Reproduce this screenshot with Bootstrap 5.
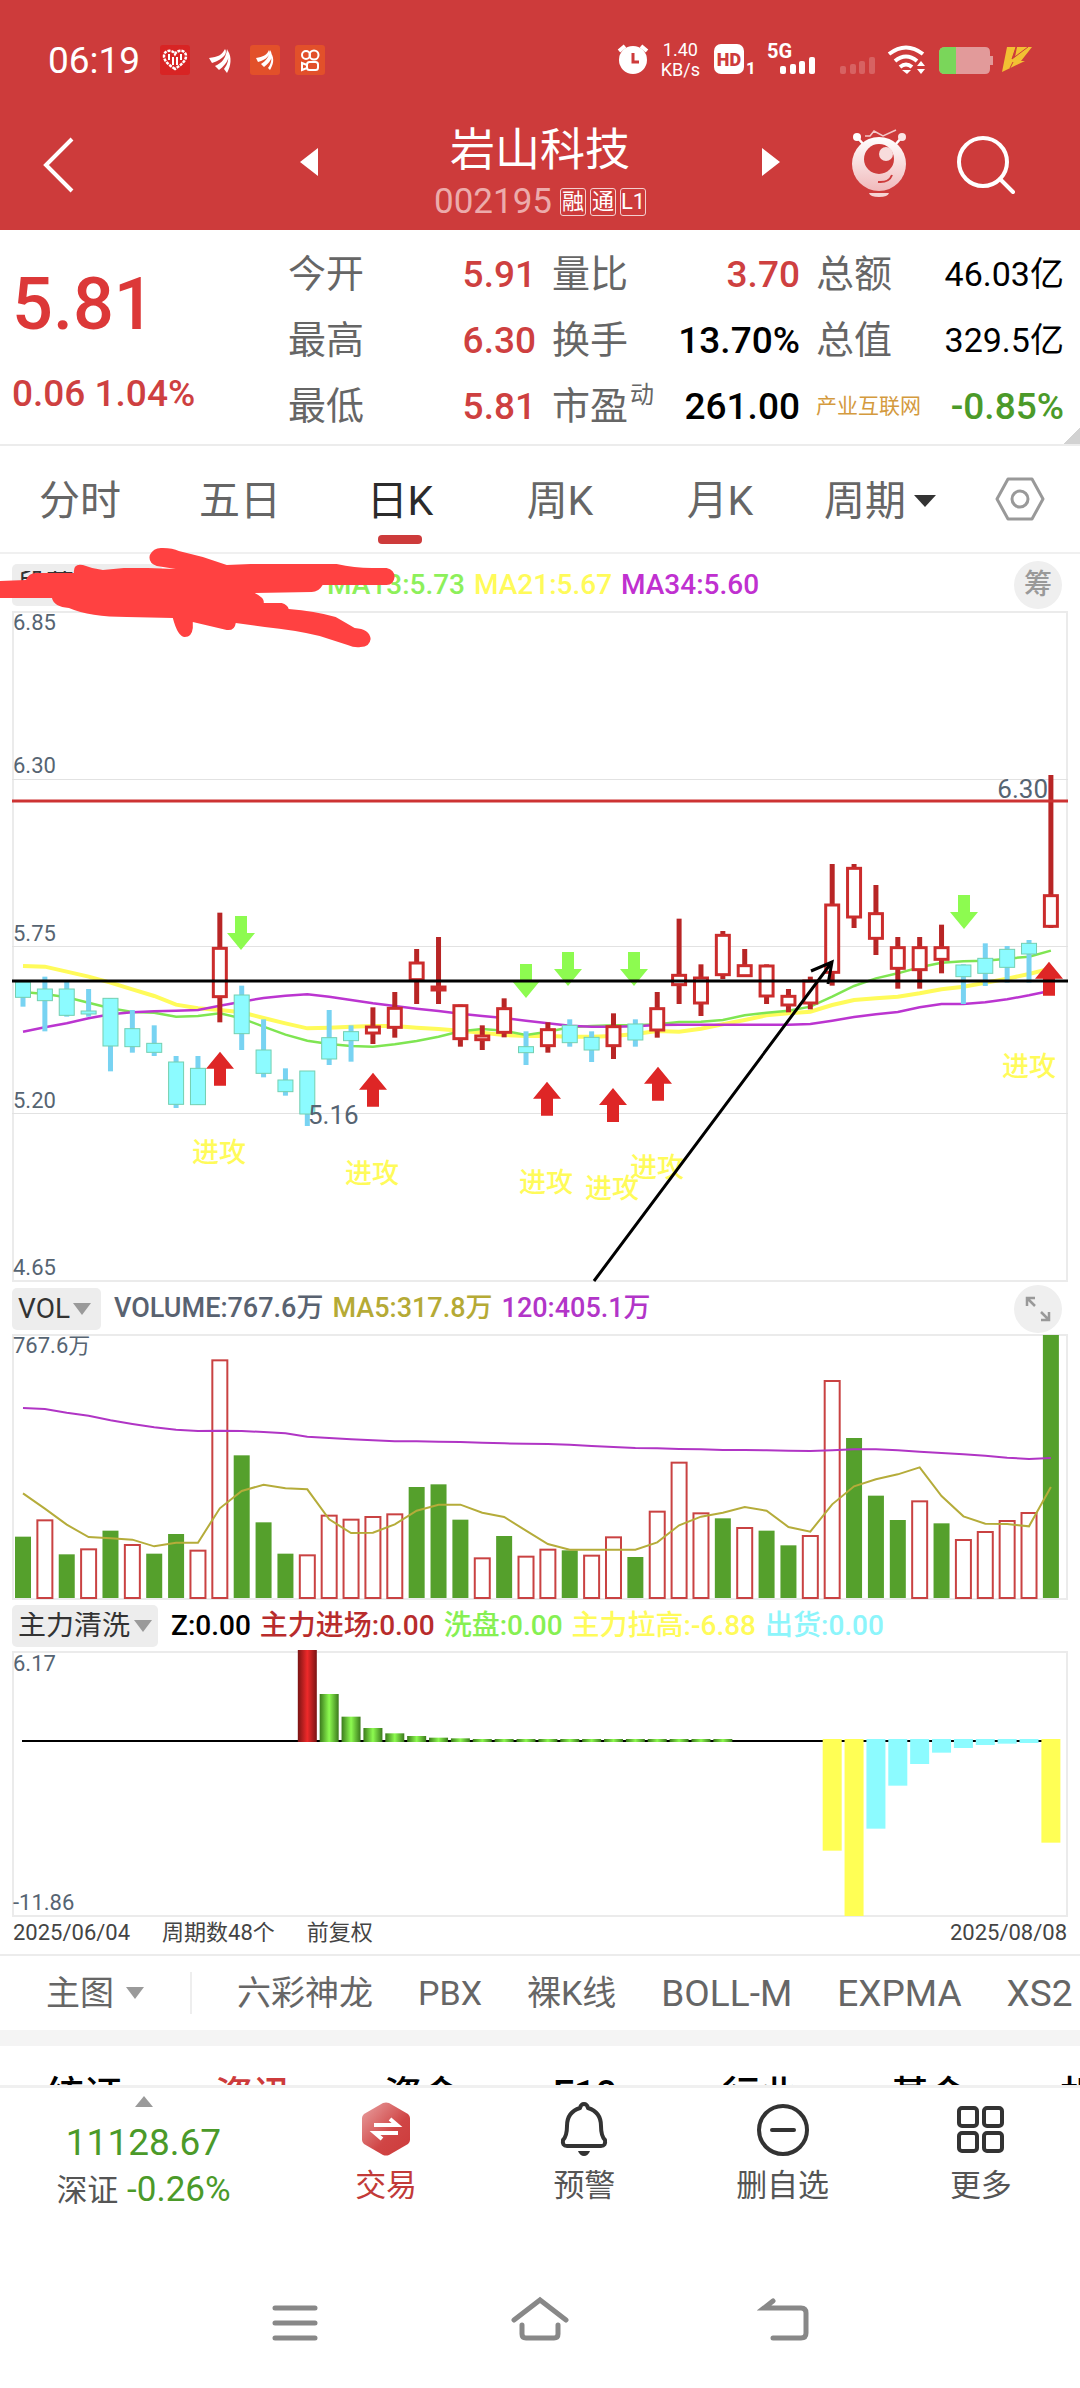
<!DOCTYPE html>
<html lang="zh-CN">
<head>
<meta charset="utf-8">
<meta name="viewport" content="width=device-width, initial-scale=1">
<title>岩山科技 002195</title>
<link href="https://cdn.jsdelivr.net/npm/bootstrap@5.3.0/dist/css/bootstrap.min.css" rel="stylesheet">
<style>
:root{--brand:#cd3b3b;--ink:#666;--line:#ececec;--axis:#566472}
body{font-family:Roboto,"Noto Sans CJK SC",sans-serif;background:#fff;color:#000;line-height:1;overflow-x:hidden}
button,select{font:inherit;color:inherit;background:none;border:0;padding:0}
svg{display:block;flex:none}
a{color:inherit;text-decoration:none}
.topbar{background:var(--brand);color:#fff;height:230px}
.statusbar{height:120px;padding:0 48px}
.clock{font-size:37px}
.rate{font-size:18px;line-height:20px}
.titlebar{height:110px}
.side{width:300px}
.back{padding:17px 0 0 43px}
.tools{padding:8px 65px 0 0;gap:48px}
.stock-name{font-size:45px;line-height:54px;margin:4px 0 0;font-weight:400}
.code{font-size:35px;color:#ecabab;line-height:40px;margin-top:4px}
.flag{font-size:22px;width:26px;height:28px;line-height:26px;border:1px solid #f3cfcf;border-radius:3px;color:#fff;text-align:center}
.quote{padding:11px 16px 5px 12px;border-bottom:2px solid var(--line);position:relative}
.quote-main{width:276px;padding-top:28px}
.price{font-size:72px;line-height:72px;font-weight:500;color:#dc3838;margin-bottom:34px}
.delta{font-size:37px;line-height:37px;font-weight:500;color:#ce4040}
.cell-row{height:66px;font-size:38px;color:var(--ink)}
.cell-row b{font-size:37px;font-weight:500;color:#000}
.cell-row .sm-num{font-size:34px;font-weight:400}
.cell-row b.up{color:#ce4040}
.cell-row b.down{color:#4b9a29}
.cell-row sup{font-size:24px;top:-16px;font-weight:400;margin-left:2px}
.sector{font-size:21px;color:#d49a3e}
.corner{position:absolute;right:0;bottom:0;width:16px;height:16px;background:linear-gradient(135deg,transparent 50%,#d2d2d2 50%)}
.period{height:108px;font-size:41px;color:var(--ink);border-bottom:2px solid #f0f0f0}
.period .tab{width:160px;height:100%;position:relative;padding-top:4px}
.period .on{color:#2b2b2b}
.period .on::after{content:"";position:absolute;left:50%;bottom:8px;width:44px;height:9px;margin-left:-22px;border-radius:4px;background:var(--brand)}
.tri{display:inline-block;border:9px solid transparent;border-top:12px solid #9a9a9a;border-bottom:0}
.tri-dark{border-width:12px 11px 0;border-top-color:#333}
.tri-up{border-top:0;border-bottom:11px solid #9a9a9a}
.legend-row{height:57px;padding:4px 18px 0 12px;font-size:28px;font-weight:500;gap:9px;white-space:nowrap}
.legend-row.tight{height:51px;padding-top:0}
.ma-row{padding-left:156px;gap:9px}
.vol-row{font-size:27px}
.chip{background:#ededed;border-radius:5px;height:42px;padding:0 6px;font-size:28px;font-weight:400;color:#333;gap:3px}
.chip select,.main-pick select{appearance:none;width:auto;text-overflow:clip}
.wide{padding-right:10px}
.roundbtn{width:48px;height:48px;border-radius:50%;background:#efefef;color:#999;font-size:28px}
.panel{padding:0 12px;position:relative}
.panel svg{width:100%;height:auto;overflow:visible}
.scribble{position:absolute;left:0;top:-10px;width:37%;pointer-events:none}
.dates{height:37px;font-size:22px;color:#444;padding:0 13px 5px;gap:32px}
.indicators{height:76px;border-top:2px solid var(--line);font-size:34px;color:var(--ink);gap:45px;padding-left:46px;overflow:hidden;white-space:nowrap}
.latin{font-size:37px}
.main-pick{gap:12px;width:146px;border-right:2px solid #eee;height:42px}
.band{height:16px;background:#f4f4f4}
.cuttabs{height:39px;overflow:hidden;padding:30px 0 0 46px;font-size:38px;line-height:38px;font-weight:500;white-space:nowrap}
.cuttabs a{width:169px;flex:none}
.bottombar{border-top:3px solid #f0f0f0;height:131px;color:#555}
.index-box{width:287px;flex:none;color:#4b9a29}
.index-val{font-size:37px;line-height:37px;margin:17px 0 11px}
.index-pct{font-size:35px;line-height:35px}
.index-pct small{font-size:31px;color:#555}
.act{font-size:31px;line-height:36px;padding-top:14px;gap:12px;flex:1 1 0}
.sysnav{height:168px;padding:80px 16% 0}
</style>
<script src="https://cdn.jsdelivr.net/npm/bootstrap@5.3.0/dist/js/bootstrap.bundle.min.js"></script>
</head>
<body>
<header class="topbar">
  <div class="statusbar d-flex align-items-center justify-content-between">
    <div class="d-flex align-items-center">
      <span class="clock me-3 pe-1">06:19</span>
      <svg width="170" height="32" viewBox="162 42 170 32">
        <rect x="162" y="43" width="30" height="30" rx="3" fill="#d82424"/>
        <path d="M177 67c-6-4-11-8-11-13 0-6 8-7 11-2 3-5 11-4 11 2 0 5-5 9-11 13z" fill="none" stroke="#fff" stroke-width="2.5" stroke-dasharray="3 1"/>
        <path d="M171 52v6m4-3v8m4-8v8m4-11v6" stroke="#fff" stroke-width="2"/>
        <path fill="#fff" d="M211 56c9-1 13-3 16-9 3 4-1 10-13 14zM217 64c7-3 11-8 12-17 4 7 1 14-8 21zM226 67c4-5 5-10 4-18 4 6 3 15-1 22z"/>
        <rect x="252" y="43" width="30" height="30" rx="3" fill="#e2502a"/>
        <path fill="#fff" d="M258 56c7-1 11-3 13-8 2 4-2 10-11 12zM263 62c5-3 8-7 9-14 4 6 1 12-6 17zM270 66c3-4 4-8 3-15 4 6 2 12-1 17z"/>
        <rect x="297" y="43" width="30" height="30" rx="3" fill="#e2502a"/>
        <g fill="none" stroke="#fff" stroke-width="2"><circle cx="308" cy="53" r="4"/><circle cx="316" cy="53" r="4.500"/><rect x="309" y="60" width="11" height="8" rx="2.500"/><path d="M304 61l5 2v3l-5 2z"/></g>
      </svg>
    </div>
    <div class="d-flex align-items-center">
      <svg width="32" height="32" viewBox="620 44 32 32"><circle cx="636" cy="60" r="14" fill="#fff"/><path d="M622 51l6-5m22 5l-6-5" stroke="#fff" stroke-width="4"/><path d="M636 53v9h6" fill="none" stroke="#cd3b3b" stroke-width="3"/></svg>
      <div class="rate text-center mx-2 ps-1">1.40<br>KB/s</div>
      <svg class="ms-1" width="320" height="36" viewBox="712 42 320 36">
        <rect x="714" y="44" width="30" height="30" rx="7" fill="#fff"/>
        <text x="729" y="66" font-size="18" font-weight="900" text-anchor="middle" fill="#cd3b3b">HD</text>
        <text x="746" y="74" font-size="17" font-weight="700" fill="#fff">1</text>
        <text x="767" y="58" font-size="20" font-weight="700" fill="#fff">5G</text>
        <g fill="#fff"><rect x="780" y="66" width="6" height="8" rx="2"/><rect x="790" y="64" width="6" height="10" rx="2"/><rect x="799" y="61" width="6" height="13" rx="2"/><rect x="809" y="57" width="6" height="17" rx="2"/></g>
        <g fill="#fff" opacity=".2"><rect x="840" y="66" width="6" height="8" rx="2"/><rect x="850" y="64" width="6" height="10" rx="2"/><rect x="859" y="61" width="6" height="13" rx="2"/><rect x="869" y="57" width="6" height="17" rx="2"/></g>
        <g fill="none" stroke="#fff" stroke-width="4"><path d="M889 54q17-13 34 0M895 61q11-9 22 0M900 67q6-5 12 0"/></g>
        <path d="M902 70h9l-4 4zM917 66l4-5 4 5zM917 69h8l-4 5z" fill="#fff"/>
        <path d="M945 47h40q5 0 5 5v4h3v9h-3v4q0 5-5 5h-40q-6 0-6-6V53q0-6 6-6z" fill="#e29a9a"/>
        <path d="M945 47h11v27h-11q-6 0-6-6V53q0-6 6-6z" fill="#7ad65a"/>
        <path d="M1007 47h9l-4 12 17-12h3l-11 14h4l-23 11zM1017 47h15l-14 15h-4z" fill="#f2c033"/>
        <path d="M1016 47l-4 12 16-12M1013 62l-3 6" fill="none" stroke="#cd3b3b" stroke-width="1"/>
      </svg>
    </div>
  </div>
  <div class="titlebar d-flex">
    <div class="side back d-flex align-items-start">
      <button type="button" aria-label="返回"><svg width="32" height="56" viewBox="0 0 32 56"><path d="M29 2L3 28l26 26" fill="none" stroke="#fff" stroke-width="4"/></svg></button>
    </div>
    <div class="flex-fill d-flex justify-content-between">
      <button type="button" aria-label="上一只" class="align-self-start mt-4 pt-1"><svg width="18" height="28" viewBox="0 0 18 28"><path d="M18 0v28L0 14z" fill="#fff"/></svg></button>
      <div class="d-flex flex-column align-items-center">
        <h1 class="stock-name">岩山科技</h1>
        <div class="code d-flex align-items-center gap-1"><span class="me-1">002195</span><span class="flag">融</span><span class="flag">通</span><span class="flag">L1</span></div>
      </div>
      <button type="button" aria-label="下一只" class="align-self-start mt-4 pt-1"><svg width="18" height="28" viewBox="0 0 18 28"><path d="M0 0v28l18-14z" fill="#fff"/></svg></button>
    </div>
    <div class="side tools d-flex align-items-start justify-content-end">
      <button type="button" aria-label="智能助手"><svg width="60" height="70" viewBox="849 128 60 70">
        <defs><linearGradient id="bot" x1="0" y1="0" x2="0" y2="1"><stop offset="0" stop-color="#fff"/><stop offset="1" stop-color="#f0b9bb"/></linearGradient></defs>
        <path d="M857 137l7 8m38-8l-7 8" stroke="#fff" stroke-width="2.500"/><circle cx="857" cy="137" r="4" fill="#fff"/><circle cx="902" cy="137" r="4" fill="#fbe5e5"/>
        <path d="M865 136h5l4-5 9 5 13-6" fill="none" stroke="#f3c9c9" stroke-width="1.500"/>
        <circle cx="879" cy="164" r="27" fill="url(#bot)"/><circle cx="879" cy="159" r="15" fill="#cd3b3b"/><circle cx="886" cy="154" r="7" fill="#f8dcdc"/>
        <path d="M878 182q11 1 14-7" fill="none" stroke="#cd3b3b" stroke-width="2"/><path d="M869 193h20q-1 4-10 4t-10-4z" fill="#f6d4d4"/></svg></button>
      <button type="button" aria-label="搜索" class="mt-2"><svg width="58" height="60" viewBox="957 134 58 60"><circle cx="983" cy="160" r="24" fill="none" stroke="#fff" stroke-width="4"/><path d="M1000 177l13 13" stroke="#fff" stroke-width="4" stroke-linecap="round"/></svg></button>
    </div>
  </div>
</header>

<main>
<section class="quote d-flex">
  <div class="quote-main"><div class="price">5.81</div><div class="delta">0.06 1.04%</div></div>
  <div class="flex-fill row row-cols-3 gx-3">
    <div class="col">
      <div class="cell-row d-flex align-items-center justify-content-between">今开<b class="up">5.91</b></div>
      <div class="cell-row d-flex align-items-center justify-content-between">最高<b class="up">6.30</b></div>
      <div class="cell-row d-flex align-items-center justify-content-between">最低<b class="up">5.81</b></div>
    </div>
    <div class="col">
      <div class="cell-row d-flex align-items-center justify-content-between">量比<b class="up">3.70</b></div>
      <div class="cell-row d-flex align-items-center justify-content-between">换手<b>13.70%</b></div>
      <div class="cell-row d-flex align-items-center justify-content-between"><span>市盈<sup>动</sup></span><b>261.00</b></div>
    </div>
    <div class="col">
      <div class="cell-row d-flex align-items-center justify-content-between">总额<b class="sm-num">46.03亿</b></div>
      <div class="cell-row d-flex align-items-center justify-content-between">总值<b class="sm-num">329.5亿</b></div>
      <div class="cell-row d-flex align-items-center justify-content-between"><span class="sector">产业互联网</span><b class="down">-0.85%</b></div>
    </div>
  </div>
  <span class="corner"></span>
</section>

<nav class="period d-flex align-items-center" aria-label="周期">
  <button type="button" class="tab">分时</button><button type="button" class="tab">五日</button><button type="button" class="tab on">日K</button><button type="button" class="tab">周K</button><button type="button" class="tab">月K</button>
  <button type="button" class="tab d-flex align-items-center justify-content-center gap-2">周期<span class="tri tri-dark"></span></button>
  <button type="button" class="flex-fill d-flex justify-content-center" aria-label="设置"><svg width="50" height="46" viewBox="0 0 50 46"><path d="M13 3h24l11 20-11 20H13L2 23z" fill="none" stroke="#999" stroke-width="3" stroke-linejoin="round"/><circle cx="25" cy="23" r="8" fill="none" stroke="#999" stroke-width="3"/></svg></button>
</nav>

<div class="position-relative">
  <div class="legend-row d-flex align-items-center">
    <div class="chip wide d-flex align-items-center"><select aria-label="主图指标"><option>段落主图</option></select><span class="tri"></span></div>
    <div class="d-flex flex-fill ma-row"><span style="color:#8df05a">MA13:5.73</span><span style="color:#fffb5a">MA21:5.67</span><span style="color:#c030d0">MA34:5.60</span></div>
    <button type="button" class="roundbtn">筹</button>
  </div>
  <div class="panel"><svg id="kline" viewBox="12 611 1056 672"></svg></div>
  <svg class="scribble" viewBox="0 544 400 106"><path fill="#ff4141" d="M0 581L26 580Q29 573 36 573H74Q73 563 83 565Q93 569 103 570L124 568H148L176 569L157 566Q148 563 150 555Q154 547 163 548Q173 548 179 551L203 557L227 565L251 564H337Q355 568 372 568H387Q395 570 395 577Q394 585 387 585H323Q319 592 312 592L255 593Q265 598 264 603L282 603Q288 605 289 609Q315 611 336 617Q343 621 355 628Q370 629 371 639Q370 647 361 647Q355 648 348 645L320 636Q295 630 265 627L236 623Q235 631 227 630L193 622V628Q192 637 185 637Q178 637 173 618L127 617Q90 617 69 608Q54 607 52 598L0 598Z"/></svg>
</div>

<div class="legend-row tight vol-row d-flex align-items-center">
  <div class="chip wide d-flex align-items-center"><select aria-label="成交量指标"><option>VOL</option></select><span class="tri"></span></div>
  <span class="ms-1" style="color:#596270">VOLUME:767.6万</span><span style="color:#b5aa35">MA5:317.8万</span><span style="color:#b235c8">120:405.1万</span>
  <button type="button" class="roundbtn ms-auto d-flex align-items-center justify-content-center" aria-label="放大"><svg width="26" height="26" viewBox="0 0 26 26" fill="none" stroke="#999" stroke-width="2.500"><path d="M2 10V2h8M2 2l8 8M24 16v8h-8M24 24l-8-8"/></svg></button>
</div>
<div class="panel"><svg id="volume" viewBox="12 1334 1056 266"></svg></div>

<div class="legend-row tight d-flex align-items-center">
  <div class="chip d-flex align-items-center"><select aria-label="副图指标"><option>主力清洗</option></select><span class="tri"></span></div>
  <span class="ms-1">Z:0.00</span><span style="color:#b82c2c">主力进场:0.00</span><span style="color:#86f052">洗盘:0.00</span><span style="color:#fffb5a">主力拉高:-6.88</span><span style="color:#8cf5fb">出货:0.00</span>
</div>
<div class="panel"><svg id="force" viewBox="12 1652 1056 266"></svg></div>

<div class="dates d-flex align-items-center"><span>2025/06/04</span><span>周期数48个</span><span>前复权</span><span class="ms-auto">2025/08/08</span></div>

<nav class="indicators d-flex align-items-center" aria-label="指标">
  <div class="main-pick d-flex align-items-center flex-shrink-0"><select aria-label="图区"><option>主图</option></select><span class="tri"></span></div>
  <a href="#">六彩神龙</a><a href="#">PBX</a><a href="#">裸K线</a><a href="#" class="latin">BOLL-M</a><a href="#" class="latin">EXPMA</a><a href="#" class="latin">XS2</a>
</nav>
<div class="band"></div>
<nav class="cuttabs d-flex" aria-label="资料"><a href="#">统证</a><a href="#" style="color:#cd3b3b">资讯</a><a href="#">资金</a><a href="#">F10</a><a href="#">行业</a><a href="#">基金</a><a href="#">机构</a></nav>
</main>

<footer>
  <div class="bottombar d-flex">
    <div class="index-box d-flex flex-column align-items-center pt-2"><span class="tri tri-up"></span><div class="index-val">11128.67</div><div class="index-pct"><small>深证</small> -0.26%</div></div>
    <button type="button" class="act d-flex flex-column align-items-center" style="color:#c23a38"><svg width="54" height="54" viewBox="0 0 54 54"><defs><linearGradient id="hex" x1="0" y1="0" x2="1" y2="1"><stop offset="0" stop-color="#e9a3a3"/><stop offset=".6" stop-color="#d04545"/><stop offset="1" stop-color="#cd3b3b"/></linearGradient></defs><path d="M24 1q3-1 6 0l19 11q2 2 2 4v22q0 2-2 4L30 53q-3 1-6 0L5 42q-2-2-2-4V16q0-2 2-4z" fill="url(#hex)"/><path d="M15 23h23l-7-6M39 31H16l7 6" fill="none" stroke="#fff" stroke-width="4"/></svg>交易</button>
    <button type="button" class="act d-flex flex-column align-items-center"><svg width="54" height="54" viewBox="0 0 54 54" fill="none" stroke="#333" stroke-width="4" stroke-linejoin="round"><path d="M27 2q3 0 4 4 13 4 13 18 0 10 4 14 1 6-4 6H10q-5 0-4-6 4-4 4-14Q10 10 23 6q1-4 4-4z"/><path d="M21 49h12q-2 5-6 5t-6-5z" fill="#333" stroke="none"/></svg>预警</button>
    <button type="button" class="act d-flex flex-column align-items-center"><svg width="54" height="54" viewBox="0 0 54 54" fill="none" stroke="#333" stroke-width="4" stroke-linecap="round"><circle cx="27" cy="28" r="24"/><path d="M16 28h22"/></svg>删自选</button>
    <button type="button" class="act d-flex flex-column align-items-center"><svg width="54" height="54" viewBox="0 0 54 54" fill="none" stroke="#333" stroke-width="4"><rect x="5" y="6" width="18" height="18" rx="3"/><rect x="30" y="6" width="18" height="18" rx="3"/><rect x="5" y="31" width="18" height="18" rx="3"/><rect x="30" y="31" width="18" height="18" rx="3"/></svg>更多</button>
  </div>
  <div class="sysnav d-flex justify-content-around align-items-start">
    <button type="button" aria-label="最近任务"><svg width="58" height="46" viewBox="0 0 58 46" stroke="#888" stroke-width="5" stroke-linecap="round"><path d="M9 12h40M9 27h40M9 42h40"/></svg></button>
    <button type="button" aria-label="主页"><svg width="58" height="46" viewBox="0 0 58 46" fill="none" stroke="#888" stroke-width="5" stroke-linecap="round"><path d="M3 24L29 4l26 20"/><path d="M11 29v9q0 4 4 4h28q4 0 4-4v-9"/></svg></button>
    <button type="button" aria-label="返回上级"><svg width="58" height="46" viewBox="0 0 58 46" fill="none" stroke="#888" stroke-width="5" stroke-linecap="round"><path d="M17 5L8 12h37q5 0 5 5v20q0 5-5 5H17"/></svg></button>
  </div>
</footer>

<script>
const X0 = 23, STEP = 21.87, cx = i => X0 + STEP * i;
const rect = (x, y, w, h, a) => `<rect x="${x}" y="${y}" width="${w}" height="${h}" ${a}/>`;
const poly = (pts, f, c, w) => `<polyline fill="none" stroke="${c}" stroke-width="${w}" points="${pts.map((p, i) => cx(i) + ',' + f(p)).join(' ')}"/>`;
const label = (x, y, t, s = 22, c = '#566472', e = '') => `<text x="${x}" y="${y}" font-size="${s}" fill="${c}" dominant-baseline="central" ${e}>${t}</text>`;

// ---- daily candles: colour, high, body top, body bottom, low
const ky = v => 860 + v / 3;
const candles = [
['c',360,366,412,440],['c',350,387,422,514],['c',366,387,466,470],['c',387,453,460,470],['c',415,415,558,634],['c',450,506,560,578],['c',496,550,577,588],['c',588,606,733,744],['c',588,625,734,734],['r',158,262,413,487],['c',377,405,521,570],['c',478,570,640,652],['c',625,660,695,707],['c',633,633,762,798],['c',450,533,597,615],['c',496,515,542,605],['r',442,498,522,552],['r',396,442,505,533],['r',267,306,362,432],['r',231,378,392,432],['r',434,434,539,560],['r',496,525,542,570],['r',415,443,520,532],['c',514,560,578,615],['r',487,506,560,578],['c',478,496,548,560],['c',514,532,570,606],['r',460,497,560,597],['c',478,492,540,560],['r',396,443,513,533],['r',176,343,377,432],['r',313,351,432,468],['r',213,223,347,357],['r',267,314,350,350],['r',313,315,411,432],['r',387,406,438,457],['r',350,360,432,448],['r',12,132,340,377],['r',12,22,174,204],['r',75,158,238,285],['r',231,260,328,386],['r',231,260,332,386],['r',194,260,301,340],['c',313,315,350,432],['c',250,295,340,378],['c',258,268,322,368],['c',240,250,282,368],['r',-255,104,202,204]];
const yellow = [318,320,335,350,368,388,408,434,445,450,457,474,490,505,503,500,498,498,503,507,512,518,525,528,528,530,530,528,522,513,515,506,493,480,466,460,455,435,420,415,410,400,388,380,368,356,342,325];
const green = [396,402,412,428,445,456,458,470,468,460,475,500,524,542,552,558,560,553,543,530,514,507,512,525,515,502,498,496,496,493,486,485,480,466,458,452,440,410,378,355,340,322,308,304,302,296,290,272];
const purple = [515,502,490,475,463,457,454,452,450,437,425,414,407,403,410,420,430,438,446,453,461,468,474,482,490,497,500,500,499,495,494,494,494,494,494,494,492,482,471,463,456,442,432,432,427,418,406,392];
let k = rect(13, 612, 1054, 669, 'fill="none" stroke="#ebebeb" stroke-width="2"');
[779, 946, 1113].forEach(y => k += `<path d="M12 ${y}.5H1068" stroke="#e2e2e2"/>`);
k += poly(yellow, ky, '#fffb5a', 4) + poly(green, ky, '#7fe552', 2.5) + poly(purple, ky, '#bb35d0', 2.5);
candles.forEach(([t, hi, a, b, lo], i) => {
  const x = cx(i), h = Math.max((b - a) / 3, 3), red = t === 'r';
  k += rect(x - 2.5, ky(hi), 5, (lo - hi) / 3, `fill="${red ? '#b82525' : '#78d3f2'}"`);
  k += red ? rect(x - 6.5, ky(a) + 1, 13, Math.max(h - 2, 3), 'fill="#fff" stroke="#cb2c2c" stroke-width="3"')
           : rect(x - 7.5, ky(a), 15, h, 'fill="#8cfbff" stroke="#74cfb0" stroke-width="1"');
});
k += `<path d="M12 801H1068" stroke="#cd3333" stroke-width="3"/>`;
const arrow = (x, v, up) => { const y = ky(v), d = up ? 1 : -1, t = up ? y : y + 34;
  k += `<path d="M${x} ${t}l14 ${17 * d}h-8v${17 * d}h-12v${-17 * d}h-8z" fill="${up ? '#de2626' : '#8dfb50'}"/>`; };
[[220,575],[373,638],[547,665],[613,684],[658,620],[1049,305]].forEach(a => arrow(...a, true));
[[241,168],[526,312],[568,276],[634,276],[964,105]].forEach(a => arrow(...a, false));
[[192,1153],[345,1174],[519,1183],[585,1189],[630,1168],[1002,1067]].forEach(([x, y]) => k += label(x, y, '进攻', 27, '#fffb5a', 'font-weight="500"'));
k += `<g stroke="#000" fill="none"><path d="M12 981H1068" stroke-width="3"/><path d="M594 1281L832 962M811 971l21-9-4 22" stroke-width="3"/></g>`;
[['6.85',622],['6.30',765],['5.75',933],['5.20',1100],['4.65',1267]].forEach(([t, y]) => k += label(13, y, t));
k += label(308, 1115, '5.16', 26) + label(1048, 789, '6.30', 26, '#566472', 'text-anchor="end"');
document.getElementById('kline').innerHTML = k;

// ---- volume
const vy = v => 1280 + v / 3;
const vols = 'g770 r718 g823 r805 g752 r792 g821 g762 r809 r238 g526 g727 g821 r823 r704 r716 r708 r700 g621 g613 g719 r832 g768 r827 r806 g811 r824 r769 g831 r692 r545 r697 g715 r741 g752 g796 r765 r300 g474 g647 g720 r661 g730 r777 r753 r720 r696 g165'.split(' ');
let v = rect(13, 1335, 1054, 264, 'fill="none" stroke="#ebebeb" stroke-width="2"');
vols.forEach((s, i) => { const y = vy(+s.slice(1)), x = cx(i);
  v += s[0] === 'g' ? rect(x - 8, y, 16, 1598 - y, 'fill="#55a02c"') : rect(x - 7.5, y + 1, 15, 1597 - y, 'fill="#fff" stroke="#c94242" stroke-width="2"'); });
v += poly([384,387,398,407,421,432,442,449,453,452,453,456,460,470,474,478,481,484,484,485,486,488,490,491,492,494,498,501,504,505,507,508,510,510,511,512,513,511,508,508,511,515,519,523,527,533,537,534], vy, '#b035c5', 2);
v += poly([640,686,734,771,775,779,799,788,788,685,633,614,625,628,718,759,758,733,692,674,674,698,711,752,792,809,809,809,809,787,736,710,698,681,692,741,755,673,619,598,583,562,648,709,731,732,739,621], vy, '#b5ac3a', 2);
v += label(13, 1345, '767.6万');
document.getElementById('volume').innerHTML = v;

// ---- main-force oscillator around the zero line
const fy = n => 1600 + n / 3;
let f = `<defs><linearGradient id="gr"><stop offset="0" stop-color="#3b7a1c"/><stop offset=".5" stop-color="#8dfb50"/><stop offset="1" stop-color="#3b7a1c"/></linearGradient><linearGradient id="rd"><stop offset="0" stop-color="#7a1414"/><stop offset=".5" stop-color="#ee2a2a"/><stop offset="1" stop-color="#7a1414"/></linearGradient></defs>`;
f += rect(13, 1653, 1054, 264, 'fill="none" stroke="#ebebeb" stroke-width="2"') + '<path d="M22 1742H1058" stroke="#000" stroke-width="2"/>';
f += rect(cx(13) - 9.5, 1651, 19, 92, 'fill="url(#rd)"');
[285,353,387,403,411,416,418,420,420,420,420,420,420,420,420,420,420,420,420].forEach((t, n) => f += rect(cx(14 + n) - 9.5, fy(t), 19, 1743 - fy(t), 'fill="url(#gr)"'));
[[37,755],[38,951],[39,689],[40,560],[41,495],[42,461],[43,447],[44,438],[45,434],[46,432],[47,731]].forEach(([i, b]) => f += rect(cx(i) - 9.5, 1740, 19, fy(b) - 1740, `fill="${i < 39 || i > 46 ? '#ffff55' : '#8cfbff'}"`));
f += label(13, 1664, '6.17') + label(13, 1903, '-11.86');
document.getElementById('force').innerHTML = f;
</script>
</body>
</html>
